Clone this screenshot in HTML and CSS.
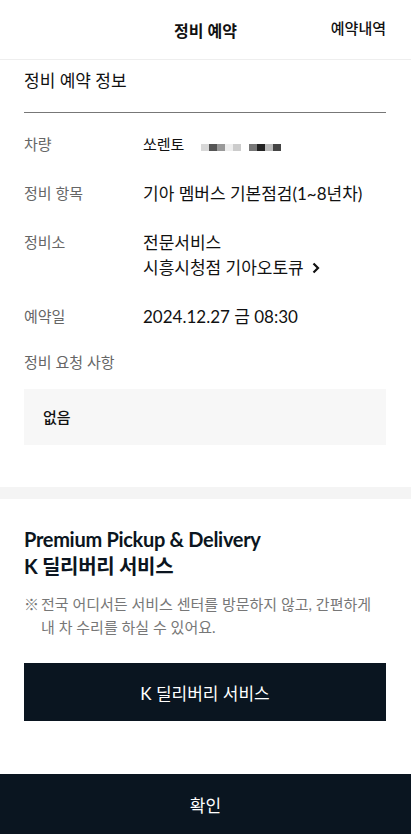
FILE: index.html
```html
<!DOCTYPE html>
<html lang="ko">
<head>
  <meta charset="UTF-8">
  <meta name="viewport" content="width=device-width, initial-scale=1.0">
  <title>정비 예약</title>
  <link rel="stylesheet" href="styles.css">
</head>
<body>
  <!-- Header -->
  <div class="header">
    <h1>정비 예약</h1>
    <a class="history" href="#">예약내역</a>
  </div>

  <div class="info">
    <h2 class="info-title">정비 예약 정보</h2>

    <div class="rows">
      <div class="row">
        <div class="label">차량</div>
        <div class="value car">
          쏘렌토
          <span class="plate">
            <i class="px p1"></i><i class="px p2"></i><i class="px p3"></i><i class="px p4"></i><i class="px p5"></i><i class="px p6"></i><i class="px p7"></i><i class="px p8"></i><i class="px p9"></i><i class="px p10"></i>
          </span>
        </div>
      </div>

      <div class="row">
        <div class="label">정비 항목</div>
        <div class="value">기아 멤버스 기본점검(1~8년차)</div>
      </div>

      <div class="row">
        <div class="label">정비소</div>
        <div class="value">
          전문서비스<br>
          <a class="shop-link" href="#">시흥시청점 기아오토큐
            <svg width="10" height="14" viewBox="0 0 10 14"><path d="M2.5 2.5 L7 7 L2.5 11.5" fill="none" stroke="#111" stroke-width="2.2"/></svg>
          </a>
        </div>
      </div>

      <div class="row">
        <div class="label">예약일</div>
        <div class="value">2024.12.27 금 08:30</div>
      </div>
    </div>

    <div class="label request-label">정비 요청 사항</div>
    <div class="request-box">없음</div>
  </div>

  <div class="divider"></div>

  <div class="delivery">
    <h3>Premium Pickup &amp; Delivery<br>K 딜리버리 서비스</h3>
    <p class="note"><span class="mark">※</span><span>전국 어디서든 서비스 센터를 방문하지 않고, 간편하게<br>내 차 수리를 하실 수 있어요.</span></p>
    <button class="delivery-button">K 딜리버리 서비스</button>
  </div>

  <button class="confirm-button">확인</button>
</body>
</html>
```

FILE: styles.css
```css
body {
  font-family: Lato, "Noto Sans CJK KR", sans-serif;
  background-color: #fff;
  color: #111;
  margin: 0;
  padding: 0;
}

/* Header */
.header {
  height: 59px;
  border-bottom: 1px solid #eee;
  display: flex;
  align-items: center;
  justify-content: center;
  position: relative;
}

.header h1 {
  margin: 0;
  font-size: 16px;
  font-weight: 700;
  color: #111;
}

.history {
  position: absolute;
  right: 25px;
  top: 0;
  line-height: 57px;
  font-size: 15px;
  font-weight: 500;
  color: #111;
  text-decoration: none;
}

/* Reservation info */
.info {
  padding: 0 25px 0 24px;
}

.info-title {
  margin: 0;
  font-size: 17px;
  font-weight: 400;
  color: #111;
  padding: 8px 0 18px;
  line-height: 26px;
  border-bottom: 1px solid #777;
}

.rows {
  display: flex;
  flex-direction: column;
  gap: 24px;
  padding-top: 19px;
}

.row {
  display: flex;
}

.label {
  width: 119px;
  flex-shrink: 0;
  font-size: 15px;
  color: #666;
  line-height: 25px;
}

.value {
  font-size: 17px;
  color: #111;
  line-height: 25px;
}

.value.car {
  font-size: 15px;
}

.plate {
  display: inline-flex;
  margin-left: 13px;
  vertical-align: -1px;
}

.px {
  display: block;
  width: 8px;
  height: 7px;
}

.p1 { background: #d8d8d8; }
.p2 { background: #555; }
.p3 { background: #999; }
.p4 { background: #eee; }
.p5 { background: #ccc; }
.p6 { background: #fff; }
.p7 { background: #777; }
.p8 { background: #222; }
.p9 { background: #bbb; }
.p10 { background: #444; }

.shop-link {
  color: #111;
  text-decoration: none;
}

.shop-link svg {
  margin-left: 3px;
  vertical-align: -1px;
}

.request-label {
  margin-top: 21px;
  line-height: 24px;
}

.request-box {
  margin-top: 15px;
  background-color: #f7f7f7;
  height: 56px;
  line-height: 56px;
  padding: 0 19px;
  font-size: 15px;
  font-weight: 500;
  color: #111;
}

.divider {
  margin-top: 42px;
  height: 12px;
  background-color: #f4f4f4;
}

/* K delivery */
.delivery {
  padding: 27px 25px 53px 24px;
}

.delivery h3 {
  margin: 0;
  font-size: 20px;
  font-weight: 700;
  line-height: 27px;
  color: #0b1520;
  letter-spacing: -0.3px;
}

.note {
  display: flex;
  margin: 13px 0 0;
  font-size: 15px;
  line-height: 23px;
  color: #777;
}

.mark {
  width: 17px;
  flex-shrink: 0;
}

.delivery-button {
  display: block;
  width: 100%;
  height: 58px;
  margin-top: 24px;
  background-color: #0a1520;
  color: #fff;
  border: none;
  font-family: inherit;
  font-size: 17px;
  cursor: pointer;
}

.confirm-button {
  display: block;
  width: 100%;
  height: 60px;
  background-color: #0a1520;
  color: #fff;
  border: none;
  font-family: inherit;
  font-size: 17px;
  cursor: pointer;
}
```
